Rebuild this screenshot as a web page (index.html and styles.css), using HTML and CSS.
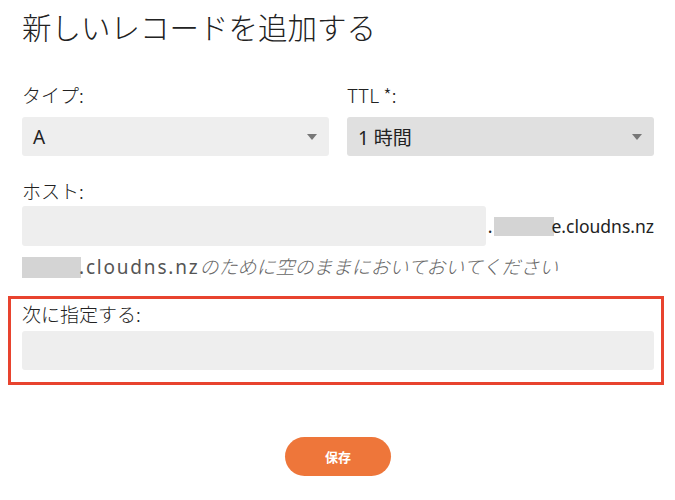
FILE: index.html
```html
<!DOCTYPE html>
<html lang="ja">
<head>
<meta charset="utf-8">
<link rel="stylesheet" href="styles.css">
</head>
<body>
<div class="page">
  <h1 class="title">新しいレコードを追加する</h1>
  <div class="row">
    <div class="field">
      <label class="label">タイプ:</label>
      <div class="select"><span class="value">A</span><span class="caret"></span></div>
    </div>
    <div class="field">
      <label class="label">TTL *:</label>
      <div class="select select-disabled"><span class="value">1 時間</span><span class="caret"></span></div>
    </div>
  </div>
  <div class="field host">
    <label class="label label-host">ホスト:</label>
    <div class="host-row">
      <div class="input host-input"></div>
      <span class="suffix">.<span class="redact redact-suffix"></span>e.cloudns.nz</span>
    </div>
    <p class="help"><span class="redact redact-help"></span><span class="help-domain">.cloudns.nz</span><em class="help-jp">のために空のままにおいておいてください</em></p>
  </div>
  <div class="field highlight">
    <label class="label label-target">次に指定する:</label>
    <div class="input target-input"></div>
  </div>
  <div class="actions">
    <button class="btn-save" type="button">保存</button>
  </div>
</div>
</body>
</html>
```
FILE: styles.css
```css
* { box-sizing: border-box; }
html, body { margin: 0; padding: 0; background: #fff; }
body {
  font-family: "Noto Sans", "Noto Sans CJK JP", sans-serif;
  color: #222;
  width: 675px;
  height: 500px;
  overflow: hidden;
}
.page {
  padding: 6px 21px 0 22px;
}
.title {
  margin: 0;
  font-family: "Noto Sans CJK JP", sans-serif;
  font-weight: 300;
  font-size: 29.5px;
  line-height: 40px;
  color: #222;
}
.row {
  display: grid;
  grid-template-columns: 307px 307px;
  column-gap: 18px;
  margin-top: 37px;
}
.field { display: flex; flex-direction: column; }
.label {
  font-family: "Noto Sans CJK JP", sans-serif;
  font-weight: 300;
  font-size: 19px;
  line-height: 24px;
  color: #222;
}
.row .label { margin-bottom: 10px; }
.select {
  height: 39px;
  background: #eeeeee;
  border-radius: 3px;
  display: flex;
  align-items: center;
  justify-content: space-between;
  padding: 0 12px 0 11px;
}
.select-disabled { background: #e0e0e0; }
.value {
  font-family: "Noto Sans", "Noto Sans CJK JP", sans-serif;
  font-size: 19px;
  color: #222;
}
.caret {
  width: 0; height: 0;
  border-left: 5px solid transparent;
  border-right: 5px solid transparent;
  border-top: 6px solid #777;
}
.host { margin-top: 23px; }
.label-host { margin-bottom: 3px; }
.host-row {
  display: flex;
  align-items: center;
}
.input {
  height: 40px;
  background: #eeeeee;
  border-radius: 3px;
}
.host-input { flex: 1; }
.suffix {
  font-size: 17.5px;
  color: #222;
  padding-left: 2px;
  display: flex;
  align-items: center;
  white-space: nowrap;
}
.redact { display: inline-block; background: #d4d4d4; }
.redact-suffix { width: 60px; height: 19px; margin-left: 2px; margin-right: -3px; }
.redact-help { width: 59px; height: 21px; margin-right: -2px; vertical-align: -4px; }
.help {
  margin: 8px 0 0;
  font-size: 19px;
  line-height: 24px;
  color: #555;
  white-space: nowrap;
}
.help-domain { letter-spacing: 1.8px; }
.help-jp {
  font-family: "Noto Sans CJK JP", sans-serif;
  font-weight: 300;
  font-style: italic;
  color: #666;
}
.highlight {
  margin: 20px -7px 0 -11px;
  padding: 3px 7px 12px 11px;
  outline: 3px solid #e8432e;
}
.label-target { margin-bottom: 5px; }
.target-input { height: 39px; }
.actions {
  display: flex;
  justify-content: center;
  margin-top: 55px;
}
.btn-save {
  width: 106px;
  height: 39px;
  border: none;
  border-radius: 20px;
  background: #ee763a;
  color: #fff;
  font-family: "Noto Sans CJK JP", sans-serif;
  font-weight: 700;
  font-size: 13px;
  padding: 0;
}
```
